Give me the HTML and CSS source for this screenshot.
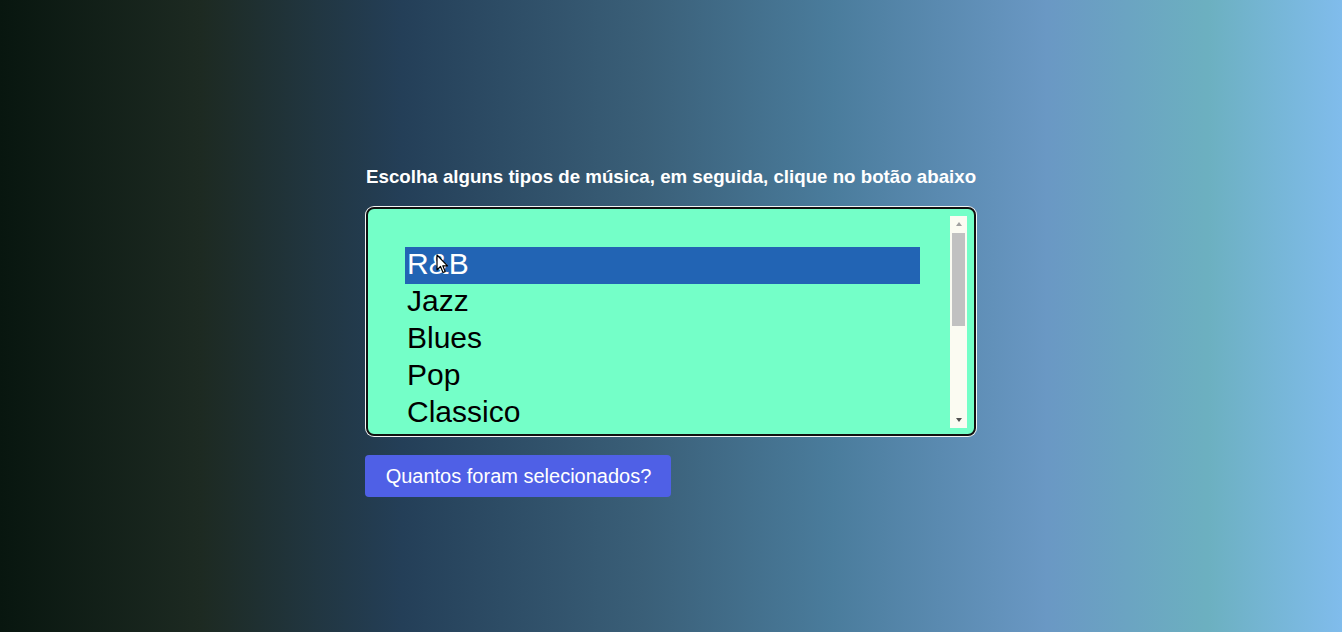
FILE: index.html
```html
<!DOCTYPE html>
<html lang="pt">
<head>
<meta charset="utf-8">
<title>Tipos de música</title>
<link rel="stylesheet" href="styles.css">
</head>
<body>
  <main class="wrap">
    <h3 class="label">Escolha alguns tipos de música, em seguida, clique no botão abaixo</h3>
    <div class="select">
      <ul class="options">
        <li class="option selected">R&amp;B
          <svg class="cursor" width="13" height="20" viewBox="0 0 13 20"><path d="M1 1 L1 16 L4.5 12.5 L7 18.5 L9.2 17.6 L6.8 11.8 L11.5 11.8 Z" fill="#fff" stroke="#000" stroke-width="1.2" stroke-linejoin="round"/></svg>
        </li>
        <li class="option">Jazz</li>
        <li class="option">Blues</li>
        <li class="option">Pop</li>
        <li class="option">Classico</li>
      </ul>
      <div class="scrollbar">
        <div class="arrow up"></div>
        <div class="track"><div class="thumb"></div></div>
        <div class="arrow down"></div>
      </div>
    </div>
    <button class="btn" type="button">Quantos foram selecionados?</button>
  </main>
</body>
</html>
```

FILE: styles.css
```css
html, body {
  margin: 0;
  height: 100%;
}
body {
  background: linear-gradient(to right, #08160f 0%, #1d2a22 15%, #243f58 30%, #3a5f78 48%, #4a7c9c 62%, #6a98c4 78%, #6cb0c0 90%, #80bcec 100%);
  font-family: "Liberation Sans", Arial, sans-serif;
}
.wrap {
  width: 612px;
  margin: 0 auto;
  padding-top: 166px;
  display: flex;
  flex-direction: column;
  align-items: flex-start;
}
.label {
  margin: 0 0 0 1px;
  color: #fff;
  font-weight: bold;
  font-size: 18.72px;
  line-height: 22px;
  white-space: nowrap;
}
.select {
  box-sizing: border-box;
  margin-top: 19px;
  margin-left: 1px;
  width: 610px;
  height: 229px;
  border: 2px solid #111;
  border-radius: 8px;
  box-shadow: 0 0 0 1px #f4f4f4;
  background: #74ffc8;
  padding: 7px 7px 6px 7px;
  display: flex;
  overflow: hidden;
}
.options {
  list-style: none;
  margin: 0;
  flex: 1;
  padding: 31px 30px 0 30px;
}
.option {
  position: relative;
  box-sizing: border-box;
  height: 37px;
  line-height: 33px;
  padding: 0 2px 4px 2px;
  font-size: 30px;
  color: #000;
}
.option.selected {
  background: #2264b4;
  color: #fff;
}
.cursor {
  position: absolute;
  left: 31px;
  top: 7px;
}
.scrollbar {
  width: 17px;
  background: #fbfbf2;
  display: flex;
  flex-direction: column;
}
.arrow {
  height: 16px;
  display: flex;
  align-items: center;
  justify-content: center;
}
.arrow::before {
  content: "";
  width: 0;
  height: 0;
  border-left: 3.5px solid transparent;
  border-right: 3.5px solid transparent;
}
.arrow.up::before {
  border-bottom: 4px solid #a0a0a0;
}
.arrow.down::before {
  border-top: 4px solid #505050;
}
.track {
  flex: 1;
  padding: 1px 2px 0 2px;
}
.thumb {
  height: 93px;
  background: #c1c1c1;
}
.btn {
  margin-top: 19px;
  height: 42px;
  width: 306px;
  border: none;
  border-radius: 4px;
  background: #4f60e6;
  color: #fff;
  font-family: "Liberation Sans", Arial, sans-serif;
  font-size: 20px;
  padding: 0 0 0 1px;
  text-align: center;
}
```
